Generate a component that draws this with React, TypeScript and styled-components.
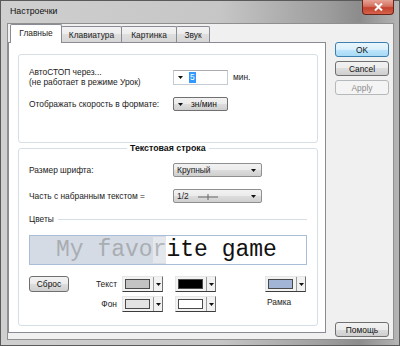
import styled, { createGlobalStyle } from 'styled-components';

const GlobalStyle = createGlobalStyle`
  html, body {
    margin: 0;
    padding: 0;
  }
  body {
    font-family: "Liberation Sans", Arial, sans-serif;
    font-size: 8.4px;
    color: #000;
    background: #fff;
  }
`;

const Window = styled.div`
  width: 400px;
  height: 346px;
  box-sizing: border-box;
  display: flex;
  flex-direction: column;
  border: 1px solid #5a5a5a;
  padding: 0 5px 5px 6px;
  background: linear-gradient(to right, #cfcfcf 0%, #c6c6c6 55%, #9d9d9d 82%, #8c8c8c 90%, #b5b5b5 100%);
`;

const TitleBar = styled.div`
  height: 22px;
  display: flex;
  justify-content: space-between;
  align-items: flex-start;
  padding-left: 3px;
`;

const Title = styled.span`
  font-size: 8.8px;
  line-height: 20px;
  color: #111;
`;

const CloseButton = styled.div`
  width: 32px;
  height: 15px;
  box-sizing: border-box;
  margin-top: -1px;
  border: 1px solid #6b2419;
  border-top: none;
  border-radius: 0 0 4px 4px;
  background: linear-gradient(#e7a397 0%, #d4715f 45%, #c2412c 55%, #d6634c 100%);
  display: flex;
  align-items: center;
  justify-content: center;
`;

const Client = styled.div`
  flex: 1;
  display: flex;
  background: #f0f0f0;
  border: 1px solid #8f8f8f;
  min-height: 0;
`;

const LeftColumn = styled.div`
  width: 318px;
  display: flex;
  flex-direction: column;
  padding-bottom: 6px;
`;

const TabStrip = styled.div`
  display: flex;
  align-items: flex-end;
  height: 19px;
  padding-left: 2px;
  margin-bottom: -1px;
  position: relative;
  z-index: 1;
`;

const Tab = styled.div<{ $active?: boolean; $width: number }>`
  box-sizing: border-box;
  width: ${(p) => p.$width}px;
  height: ${(p) => (p.$active ? 19 : 16)}px;
  margin-bottom: ${(p) => (p.$active ? 0 : 1)}px;
  margin-left: -1px;
  border: 1px solid #898c95;
  border-bottom: none;
  border-radius: 2px 2px 0 0;
  background: ${(p) =>
    p.$active ? '#fff' : 'linear-gradient(#f3f3f3, #ececec 50%, #dedede 50%, #d6d6d6)'};
  display: flex;
  align-items: center;
  justify-content: center;
  padding-bottom: ${(p) => (p.$active ? 2 : 0)}px;
  color: #222;
  &:first-child {
    margin-left: 0;
  }
`;

const Panel = styled.div`
  flex: 1;
  box-sizing: border-box;
  border: 1px solid #898c95;
  background: #fff;
  padding: 11px 7px 6px 9px;
  display: flex;
  flex-direction: column;
`;

const Box = styled.div`
  box-sizing: border-box;
  height: 89px;
  border: 1px solid #d5dfe5;
  border-radius: 3px;
  padding: 12px 10px 0 10px;
`;

const Row = styled.div<{ $gap?: number }>`
  display: grid;
  grid-template-columns: 139px auto auto;
  justify-content: start;
  align-items: center;
  column-gap: 5px;
  margin-top: ${(p) => p.$gap ?? 0}px;
  color: #222;
`;

const TwoLine = styled.div`
  line-height: 10px;
`;

const Spinner = styled.div`
  box-sizing: border-box;
  width: 55px;
  height: 15px;
  border: 1px solid #c5cbd3;
  border-top-color: #abadb3;
  background: #fff;
  display: flex;
  align-items: center;
  padding-left: 4px;
`;

const Selected = styled.span`
  margin-left: 6px;
  padding: 0 1px;
  line-height: 11px;
  background: #3399ff;
  color: #fff;
`;

const Button = styled.div<{ $width?: number; $default?: boolean; $disabled?: boolean }>`
  box-sizing: border-box;
  width: ${(p) => p.$width ?? 54}px;
  height: 15px;
  border: 1px solid ${(p) => (p.$default ? '#3c7fb1' : p.$disabled ? '#b5b9bc' : '#707070')};
  border-radius: 3px;
  background: ${(p) =>
    p.$disabled
      ? '#f4f4f4'
      : p.$default
        ? 'linear-gradient(#eaf6fd, #d9f0fc 50%, #bee6fd 50%, #a7d9f5)'
        : 'linear-gradient(#f2f2f2, #ebebeb 50%, #dddddd 50%, #cfcfcf)'};
  color: ${(p) => (p.$disabled ? '#8c8c8c' : '#111')};
  display: flex;
  align-items: center;
  justify-content: center;
`;

const DropButton = styled(Button)`
  height: 14px;
  justify-content: flex-start;
  padding-left: 4px;
  gap: 8px;
  border-radius: 2px;
`;

const Fieldset = styled.fieldset`
  flex: 1;
  min-width: 0;
  margin: 0;
  border: 1px solid #d5dfe5;
  border-radius: 3px;
  padding: 10px 10px 0 10px;
`;

const Legend = styled.legend`
  font-weight: bold;
  font-size: 8.8px;
  line-height: 10px;
  padding: 0 3px;
  margin-left: 98px;
  color: #111;
`;

const Select = styled.div<{ $gap?: number }>`
  box-sizing: border-box;
  width: 89px;
  height: 14px;
  border: 1px solid #8e8f8f;
  border-radius: 2px;
  background: linear-gradient(#f2f2f2, #ebebeb 50%, #dddddd 50%, #cfcfcf);
  display: flex;
  align-items: center;
  padding: 0 5px 0 3px;
  gap: ${(p) => p.$gap ?? 0}px;
`;

const Spacer = styled.span`
  flex: 1;
`;

const Header = styled.div`
  display: flex;
  align-items: center;
  margin-top: 11px;
  line-height: 11px;
  color: #222;
`;

const Rule = styled.span`
  flex: 1;
  height: 1px;
  margin-left: 4px;
  background: #d5dfe5;
`;

const Preview = styled.div`
  box-sizing: border-box;
  height: 30px;
  margin-top: 10px;
  border: 1px solid #a9bcd8;
  display: flex;
  font-family: "Liberation Mono", "Courier New", monospace;
  font-size: 23px;
  line-height: 28px;
  white-space: pre;
`;

const Typed = styled.span`
  padding-left: 26px;
  background: #d4dbe4;
  color: #a9adb2;
`;

const Cursor = styled.span`
  background: #e4e8ec;
  color: #b3b6ba;
`;

const Rest = styled.span`
  flex: 1;
  background: #fff;
  color: #111;
`;

const ColorGrid = styled.div`
  display: grid;
  grid-template-columns: 40px 53px 53px 1fr 42px;
  grid-template-rows: 16px 16px;
  row-gap: 4px;
  margin-top: 11px;
  align-items: center;
  color: #222;
`;

const PickerLabel = styled.span`
  justify-self: end;
  padding-right: 5px;
`;

const Picker = styled.div`
  box-sizing: border-box;
  width: 41px;
  height: 16px;
  display: flex;
  background: #f2f2f2;
  border: 1px solid;
  border-color: #e6e6e6 #6f6f6f #3c3c3c #e6e6e6;
`;

const Swatch = styled.span<{ $color: string }>`
  flex: 1;
  margin: 2px 3px 2px 2px;
  border: 1px solid #4a4a4a;
  background: ${(p) => p.$color};
`;

const PickerArrow = styled.span`
  width: 8px;
  border-left: 1px solid #9a9a9a;
  display: flex;
  align-items: center;
  justify-content: center;
`;

const FrameLabel = styled.span`
  align-self: start;
  padding-left: 2px;
  margin-top: 1px;
`;

const RightColumn = styled.div`
  width: 54px;
  margin-left: 9px;
  padding: 18px 0 2px;
  display: flex;
  flex-direction: column;
  gap: 4px;
`;

const BottomButton = styled(Button)`
  margin-top: auto;
`;

function Arrow() {
  return (
    <svg width="5" height="3" viewBox="0 0 5 3">
      <polygon points="0,0 5,0 2.5,3" fill="#111" />
    </svg>
  );
}

function ColorPicker({ color }: { color: string }) {
  return (
    <Picker>
      <Swatch $color={color} />
      <PickerArrow>
        <Arrow />
      </PickerArrow>
    </Picker>
  );
}

export default function App() {
  return (
    <>
      <GlobalStyle />
      <Window>
        <TitleBar>
          <Title>Настроечки</Title>
          <CloseButton>
            <svg width="9" height="8" viewBox="0 0 9 8">
              <path d="M1 0.5 L8 7.5 M8 0.5 L1 7.5" stroke="#fff" strokeWidth="2" />
            </svg>
          </CloseButton>
        </TitleBar>
        <Client>
          <LeftColumn>
            <TabStrip>
              <Tab $active $width={52}>Главные</Tab>
              <Tab $width={61}>Клавиатура</Tab>
              <Tab $width={56}>Картинка</Tab>
              <Tab $width={34}>Звук</Tab>
            </TabStrip>
            <Panel>
              <Box>
                <Row>
                  <TwoLine>
                    АвтоСТОП через...
                    <br />
                    (не работает в режиме Урок)
                  </TwoLine>
                  <Spinner>
                    <Arrow />
                    <Selected>5</Selected>
                  </Spinner>
                  <span>мин.</span>
                </Row>
                <Row $gap={10}>
                  <span>Отображать скорость в формате:</span>
                  <DropButton $width={55}>
                    <Arrow />
                    <span>зн/мин</span>
                  </DropButton>
                </Row>
              </Box>
              <Fieldset>
                <Legend>Текстовая строка</Legend>
                <Row>
                  <span>Размер шрифта:</span>
                  <Select>
                    <span>Крупный</span>
                    <Spacer />
                    <Arrow />
                  </Select>
                </Row>
                <Row $gap={12}>
                  <span>Часть с набранным текстом =</span>
                  <Select $gap={9}>
                    <span>1/2</span>
                    <svg width="20" height="7" viewBox="0 0 20 7">
                      <path d="M0 4 H20 M10 1 V7" stroke="#666" strokeWidth="1" />
                    </svg>
                    <Spacer />
                    <Arrow />
                  </Select>
                </Row>
                <Header>
                  <span>Цветы</span>
                  <Rule />
                </Header>
                <Preview>
                  <Typed>
                    My favo<Cursor>r</Cursor>
                  </Typed>
                  <Rest>ite game</Rest>
                </Preview>
                <ColorGrid>
                  <Button $width={40} style={{ height: 16 }}>
                    Сброс
                  </Button>
                  <PickerLabel>Текст</PickerLabel>
                  <ColorPicker color="#c3c3c3" />
                  <ColorPicker color="#000000" />
                  <ColorPicker color="#a3b5d6" />
                  <span />
                  <PickerLabel>Фон</PickerLabel>
                  <ColorPicker color="#e3e3e3" />
                  <ColorPicker color="#ffffff" />
                  <FrameLabel>Рамка</FrameLabel>
                </ColorGrid>
              </Fieldset>
            </Panel>
          </LeftColumn>
          <RightColumn>
            <Button $default>OK</Button>
            <Button>Cancel</Button>
            <Button $disabled>Apply</Button>
            <BottomButton>Помощь</BottomButton>
          </RightColumn>
        </Client>
      </Window>
    </>
  );
}
